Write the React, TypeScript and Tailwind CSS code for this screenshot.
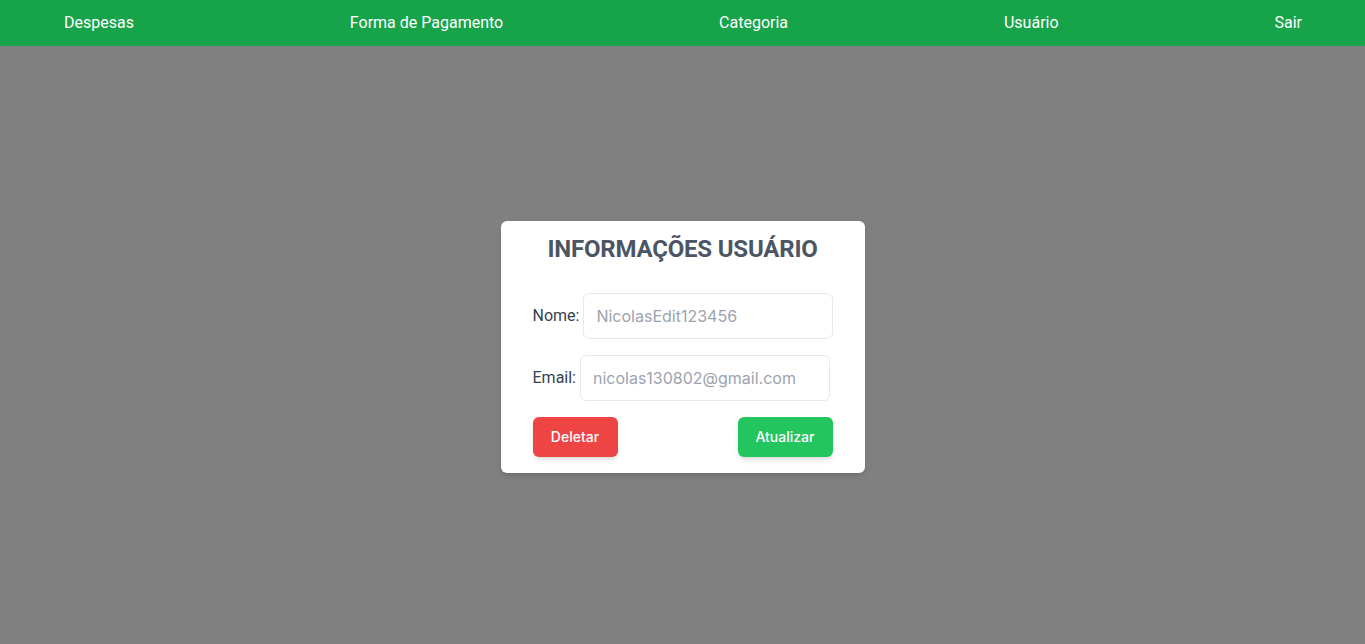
import React from "react";

export default function App() {
  return (
    <div className="min-h-[644px] w-full bg-[#808080] flex flex-col" style={{ fontFamily: "Inter, 'Noto Sans', sans-serif" }}>
      <nav className="h-[46px] bg-[#16a34a] flex items-center justify-between pl-16 pr-[63px] text-white text-base" style={{ fontFamily: "Roboto, sans-serif" }}>
        <a>Despesas</a>
        <a>Forma de Pagamento</a>
        <a>Categoria</a>
        <a>Usuário</a>
        <a>Sair</a>
      </nav>
      <div className="flex justify-center pt-[175px]">
        <div className="w-[364px] bg-white rounded-md shadow-md px-8 pt-3 pb-4 flex flex-col">
          <h1 className="text-2xl font-bold text-[#4b5563] text-center leading-8 tracking-[-0.2px]" style={{ fontFamily: "Roboto, sans-serif" }}>
            INFORMAÇÕES USUÁRIO
          </h1>
          <div className="mt-7 flex items-center gap-1">
            <label className="text-[#374151] text-base" style={{ fontFamily: "Roboto, sans-serif" }}>Nome:</label>
            <input
              className="w-[250px] h-[46px] border border-[#e5e7eb] rounded-md px-[12px] text-base placeholder:text-[#9ca3af] outline-none"
              placeholder="NicolasEdit123456"
            />
          </div>
          <div className="mt-4 flex items-center gap-1">
            <label className="text-[#374151] text-base" style={{ fontFamily: "Roboto, sans-serif" }}>Email:</label>
            <input
              className="w-[250px] h-[46px] border border-[#e5e7eb] rounded-md px-3 text-base placeholder:text-[#9ca3af] outline-none"
              placeholder="nicolas130802@gmail.com"
            />
          </div>
          <div className="mt-4 flex justify-between">
            <button className="w-[85px] h-10 bg-[#ef4444] text-white text-sm font-medium rounded-md shadow-md">Deletar</button>
            <button className="w-[95px] h-10 bg-[#22c55e] text-white text-sm font-medium rounded-md shadow-md">Atualizar</button>
          </div>
        </div>
      </div>
    </div>
  );
}
